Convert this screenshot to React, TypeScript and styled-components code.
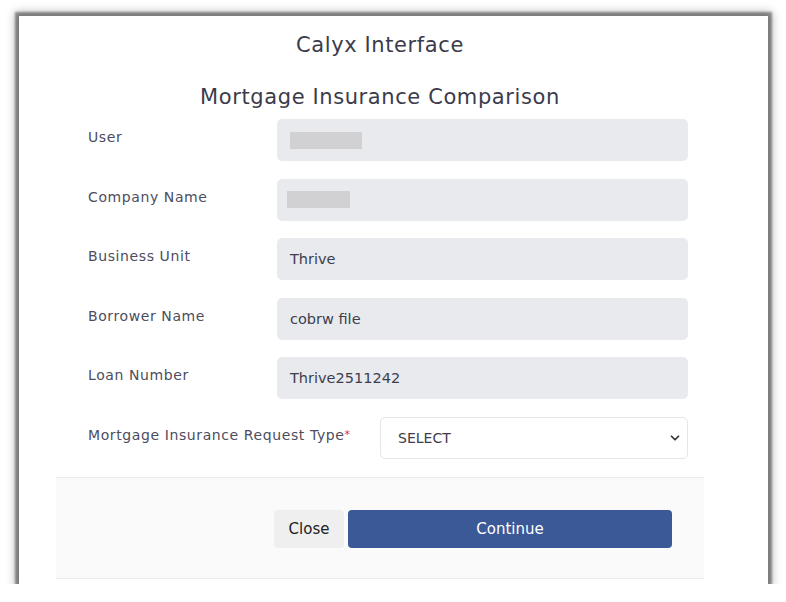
import React from "react";
import styled, { createGlobalStyle } from "styled-components";
import { ChevronDown } from "lucide-react";

const GlobalStyle = createGlobalStyle`
  body {
    margin: 0;
    background: #ffffff;
    font-family: "DejaVu Sans", "Noto Sans", sans-serif;
  }
`;

const Page = styled.div`
  padding: 16px 0 0 19px;
`;

const Modal = styled.div`
  width: 749px;
  height: 568px;
  background: #ffffff;
  box-shadow: 0 0 2px 4px rgba(0, 0, 0, 0.38), 0 0 9px 4px rgba(0, 0, 0, 0.28);
`;

const Body = styled.div`
  margin-left: 37px;
  width: 648px;
`;

const Title = styled.h1<{ size: number; top: number }>`
  margin: 0;
  padding-top: ${(p) => p.top}px;
  text-align: center;
  font-size: ${(p) => p.size}px;
  font-weight: 500;
  letter-spacing: 0.6px;
  color: #3b3b4b;
  line-height: 28px;
`;

const Form = styled.div`
  display: flex;
  flex-direction: column;
  gap: 17.5px;
  padding: 8px 16px 0 32px;
`;

const Row = styled.div<{ labelWidth: number }>`
  display: grid;
  grid-template-columns: ${(p) => p.labelWidth}px 1fr;
  align-items: start;
`;

const Label = styled.label`
  padding-top: 9px;
  font-size: 14px;
  letter-spacing: 0.6px;
  color: #4d4d5e;
  line-height: 18px;
`;

const Required = styled.span`
  color: #e0245e;
  font-size: 11px;
  vertical-align: top;
`;

const Field = styled.div`
  height: 42px;
  display: flex;
  align-items: center;
  padding: 0 13px;
  background: #e8eaed;
  border-radius: 5px;
  font-size: 14.5px;
  color: #3d3d4d;
`;

// greyed-out block where a value is hidden
const Masked = styled.div<{ width: number; offset: number }>`
  width: ${(p) => p.width}px;
  height: 17px;
  margin-left: ${(p) => p.offset}px;
  background: #d1d1d3;
`;

const SelectWrap = styled.div`
  position: relative;
  height: 42px;
`;

const Select = styled.select`
  appearance: none;
  width: 100%;
  height: 42px;
  padding: 0 17px;
  background: #ffffff;
  border: 1px solid #e3e6ea;
  border-radius: 5px;
  font-family: inherit;
  font-size: 14px;
  color: #3d3d4d;
`;

const Chevron = styled(ChevronDown)`
  position: absolute;
  right: 6px;
  top: 14px;
  pointer-events: none;
  color: #333;
`;

const Footer = styled.div`
  margin-top: 18px;
  height: 102px;
  box-sizing: border-box;
  padding: 32px 32px 0 0;
  display: flex;
  justify-content: flex-end;
  align-items: flex-start;
  gap: 4px;
  background: #fafafa;
  border-top: 1px solid #ececec;
  border-bottom: 1px solid #ececec;
`;

const Button = styled.button<{ primary?: boolean }>`
  height: 38px;
  width: ${(p) => (p.primary ? 324 : 70)}px;
  border: none;
  border-radius: 4px;
  font-family: inherit;
  font-size: 15px;
  background: ${(p) => (p.primary ? "#3b5897" : "#efefef")};
  color: ${(p) => (p.primary ? "#ffffff" : "#222222")};
  cursor: pointer;
`;

const App = () => {
  return (
    <Page>
      <GlobalStyle />
      <Modal>
        <Body>
          <Title size={21} top={15}>
            Calyx Interface
          </Title>
          <Title size={21} top={24}>
            Mortgage Insurance Comparison
          </Title>
          <Form>
            <Row labelWidth={189}>
              <Label>User</Label>
              <Field>
                <Masked width={72} offset={0} />
              </Field>
            </Row>
            <Row labelWidth={189}>
              <Label>Company Name</Label>
              <Field>
                <Masked width={63} offset={-3} />
              </Field>
            </Row>
            <Row labelWidth={189}>
              <Label>Business Unit</Label>
              <Field>Thrive</Field>
            </Row>
            <Row labelWidth={189}>
              <Label>Borrower Name</Label>
              <Field>cobrw file</Field>
            </Row>
            <Row labelWidth={189}>
              <Label>Loan Number</Label>
              <Field>Thrive2511242</Field>
            </Row>
            <Row labelWidth={292}>
              <Label>
                Mortgage Insurance Request Type<Required>*</Required>
              </Label>
              <SelectWrap>
                <Select defaultValue="">
                  <option value="">SELECT</option>
                </Select>
                <Chevron size={14} strokeWidth={3} />
              </SelectWrap>
            </Row>
          </Form>
          <Footer>
            <Button>Close</Button>
            <Button primary>Continue</Button>
          </Footer>
        </Body>
      </Modal>
    </Page>
  );
};

export default App;
